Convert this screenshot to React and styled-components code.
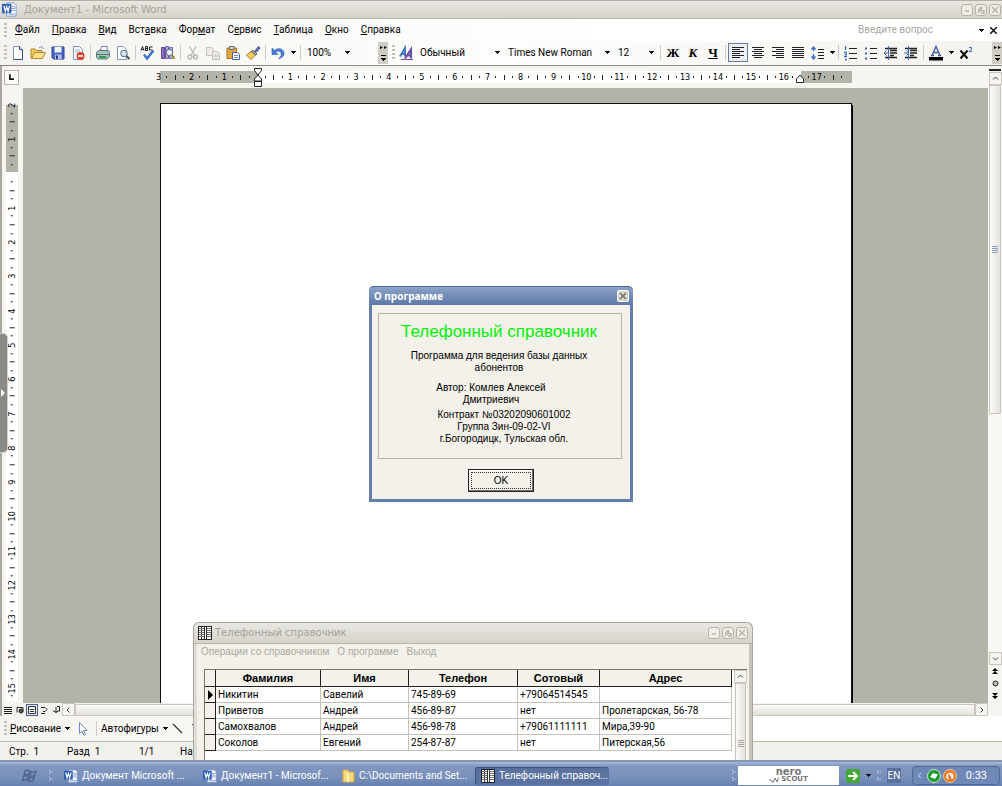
import React from "react";
import styled, { createGlobalStyle, css } from "styled-components";

const UI = 'Roboto, "Liberation Sans", sans-serif';
const SANS = '"Liberation Sans", Arial, sans-serif';

const Global = createGlobalStyle`
  * { box-sizing: border-box; }
  body { margin: 0; font: 10px/12px ${UI}; color: #000; overflow: hidden; }
  button, input, select {
    font: inherit; color: inherit; border: 0; padding: 0; margin: 0;
    background: none; appearance: none; outline: none; border-radius: 0;
  }
  svg { display: block; flex: none; }
  u { text-underline-offset: 1px; }
`;

/* ---------- shared pieces ---------- */

const Screen = styled.div`
  position: relative;
  display: flex;
  flex-direction: column;
  height: 100vh;
  background: #f3f1ec;
  overflow: hidden;
`;

const Caret = ({ color = "#111" }) => (
  <svg width="5" height="3" viewBox="0 0 5 3" shapeRendering="crispEdges">
    <path d="M0 0h5v1H4v1H3v1H2V2H1V1H0z" fill={color} />
  </svg>
);

const Grip = styled.span`
  flex: none;
  width: 3px;
  height: 15px;
  margin: 0 1px 0 4px;
  background: repeating-linear-gradient(#c4c1b8 0 2px, transparent 2px 4px);
`;

const Separator = styled.span`
  flex: none;
  width: 1px;
  height: 15px;
  margin: 0 2px;
  background: #cfccc2;
`;

/* ---------- window caption ---------- */

const TitleBar = styled.header`
  display: flex;
  align-items: center;
  flex: none;
  height: 19px;
  padding: 0 1px 0 2px;
  gap: 7px;
  border-top: 1px solid #b3afa5;
  border-bottom: 1px solid #b7b4aa;
  background: linear-gradient(#e9e7e2, #d6d3cb);
`;

const Caption = styled.h1`
  flex: 1;
  margin: 0;
  font: 10px/14px "DejaVu Sans", sans-serif;
  color: #a5a29a;
  white-space: nowrap;
`;

const CaptionButtons = styled.div`
  display: flex;
  gap: 2px;
`;

const CaptionButton = styled.button`
  width: 12px;
  height: 12px;
  display: grid;
  place-items: center;
  border: 1px solid #b5b2a8;
  border-radius: 3px;
  background: #efede7;
`;

const captionMarks = {
  min: "M2 5h4",
  max: "M1 4.500 4.500 1M4.500 1v3M1 7l3-3 3 1M4 7h3V4",
  close: "M1 1l6 6M7 1L1 7",
};

const WindowButtons = () => (
  <CaptionButtons>
    {[["min", "Свернуть"], ["max", "Развернуть"], ["close", "Закрыть"]].map(([k, label]) => (
      <CaptionButton key={k} aria-label={label}>
        <svg width="8" height="8" viewBox="0 0 8 8" fill="none" stroke="#b5b2a8" strokeWidth="1.400">
          <path d={captionMarks[k]} />
        </svg>
      </CaptionButton>
    ))}
  </CaptionButtons>
);

const WordMark = ({ size = 16 }) => (
  <svg width={size} height={size} viewBox="0 0 16 16">
    <path d="M5 1h8l2 2v12H5z" fill="#fff" stroke="#7d9bd1" />
    <path d="M10 5h4M10 7h4M10 9h4M7 13h7" stroke="#7d9bd1" />
    <path d="M0 2h10v10H0z" fill="#2c5cb5" />
    <path d="M2 4l1.500 6L5 5l1.500 5L8 4" fill="none" stroke="#fff" strokeWidth="1.300" />
  </svg>
);

/* ---------- menu and toolbars ---------- */

const MenuBar = styled.nav`
  display: flex;
  align-items: center;
  flex: none;
  height: 22px;
  background: linear-gradient(90deg, #f5f4f0, #fff 60%);
`;

const MenuItem = styled.button`
  margin: 0 12px 0 0;
  white-space: nowrap;
  &:first-of-type { margin-left: 7px; }
`;

const AskBox = styled.input`
  width: 121px;
  margin-left: auto;
  &::placeholder { color: #aaa79f; opacity: 1; }
`;

const IconButton = styled.button`
  flex: none;
  display: grid;
  place-items: center;
  width: ${(p) => p.$w || 20}px;
  height: 19px;
  ${(p) => p.$on && css`border: 1px solid #6a7aa6; background: #eeeff4;`}
`;

const ToolBar = styled.div`
  display: flex;
  align-items: center;
  flex: none;
  height: 25px;
  padding-bottom: 1px;
  border-bottom: 1px solid #8b8981;
  background: linear-gradient(90deg, #f4f3ef, #fdfdfc 50%, #f4f3ef);
`;

const Combo = styled.label`
  display: grid;
  align-items: center;
  flex: none;
  width: ${(p) => p.$w}px;
  height: 18px;
  margin-right: ${(p) => p.$after || 0}px;
  > * { grid-area: 1 / 1; }
  > select { width: 100%; padding-left: 4px; }
  > svg { justify-self: end; margin-right: 4px; pointer-events: none; }
`;

const ComboBox = ({ w, value, label, after }) => (
  <Combo $w={w} $after={after}>
    <select aria-label={label} defaultValue={value}>
      <option>{value}</option>
    </select>
    <Caret />
  </Combo>
);

const Overflow = styled.button`
  flex: none;
  display: flex;
  flex-direction: column;
  align-items: center;
  justify-content: space-between;
  width: 10px;
  height: 22px;
  padding: 4px 0 3px;
  background: #cfccc4;
`;

const OverflowButton = () => (
  <Overflow aria-label="Параметры панели">
    <svg width="7" height="3" viewBox="0 0 7 3"><path d="M0 0l3 1.500L0 3zM4 0l3 1.500L4 3z" /></svg>
    <svg width="5" height="6" viewBox="0 0 5 6" shapeRendering="crispEdges"><path d="M0 0h5v1H0zM0 3h5L3 6H2z" /></svg>
  </Overflow>
);

const Push = styled.span`
  flex: 1;
`;

const Letter = styled.span`
  font: bold 13px/16px "Liberation Serif", serif;
  font-style: ${(p) => (p.$i ? "italic" : "normal")};
  text-decoration: ${(p) => (p.$u ? "underline" : "none")};
`;

const lines = (rows, color = "#222") =>
  rows.map(([x, w], i) => <path key={i} d={`M${x} ${2.5 + i * 2}h${w}`} stroke={color} />);

const icons = {
  new: (
    <>
      <path d="M3.500 1.500h6l3 3v10h-9z" fill="#fff" stroke="#7a92bd" />
      <path d="M12.500 5v9.500h-9" fill="none" stroke="#2f4f86" />
      <path d="M9.500 1.500v3h3" fill="#c9d7ef" stroke="#2f4f86" />
    </>
  ),
  open: (
    <>
      <path d="M1 13.500V4h4l1.500 1.500H12V8" fill="#f4cf62" stroke="#a9822c" />
      <path d="M1.500 13.500 4.500 7.500h11l-3 6z" fill="#fbe08a" stroke="#b08a30" />
      <path d="M9 3c2-2 4-1 5 1" fill="none" stroke="#6b84b8" />
    </>
  ),
  save: (
    <>
      <path d="M2 2h12v12H3.500L2 12.500z" fill="#4965c0" stroke="#2c3f93" />
      <path d="M4.500 2h7v5.500h-7z" fill="#eef2fb" />
      <path d="M5 9.500h6.500V14H5z" fill="#b8c4e6" />
      <path d="M6 10.500h2V14H6z" fill="#2c3f93" />
    </>
  ),
  perm: (
    <>
      <path d="M3.500 1.500h6l3 3v10h-9z" fill="#fff" stroke="#7a92bd" />
      <path d="M5 5h5M5 7h5" stroke="#9bb0d6" />
      <circle cx="10.500" cy="11" r="4" fill="#d8402c" />
      <path d="M8 11h5" stroke="#fff" strokeWidth="1.600" />
    </>
  ),
  print: (
    <>
      <path d="M5 6 6.500 1.500h6L11.500 6z" fill="#fff" stroke="#6f86a8" />
      <path d="M1.500 7.500 4 5.500h9.500l1 2v4l-2.500 2.500H3l-1.500-2z" fill="#a8c3b9" stroke="#55767c" />
      <path d="M2 9.500h12" stroke="#55767c" />
      <path d="M4 12h7" stroke="#2f9e4c" strokeWidth="2" />
    </>
  ),
  preview: (
    <>
      <path d="M2.500 1.500h6l3 3v10h-9z" fill="#fff" stroke="#7a92bd" />
      <circle cx="9" cy="8.500" r="3.300" fill="#cfe4f3" stroke="#59697e" />
      <path d="M11.500 11l3 3" stroke="#5c5546" strokeWidth="2" />
    </>
  ),
  spell: (
    <>
      <path d="M1 5.500 2.500 1.500 4 5.500M1.500 4.500h2M5.500 1.500v4h2v-4zM5.500 3.500h2M12.500 2h-3v3h3" fill="none" stroke="#222" />
      <path d="M4 9.500l3 4 6.500-8" fill="none" stroke="#3e72cf" strokeWidth="2.400" />
    </>
  ),
  research: (
    <>
      <path d="M1.500 2.500h3v11h-3z" fill="#8b6fc0" stroke="#5c4798" />
      <path d="M5.500 1.500h3v12h-3z" fill="#b6a3dc" stroke="#6a57a8" />
      <path d="M9.500 2.500h3v11h-3z" fill="#a9bce4" stroke="#5c74b4" />
      <circle cx="9.500" cy="7.500" r="3.200" fill="#e9eef7" stroke="#59697e" />
      <path d="M11.700 10l3 3.500" stroke="#b0862c" strokeWidth="2" />
    </>
  ),
  cut: (
    <g fill="none" stroke="#bdbab2" strokeWidth="1.300">
      <path d="M4.500 1.500l5 8.500M11 1.500 6 10" />
      <circle cx="5" cy="12" r="2" />
      <circle cx="10.500" cy="12" r="2" />
    </g>
  ),
  copy: (
    <g fill="#eeece6" stroke="#c5c2b9">
      <path d="M1.500 2.500h5l2 2v6h-7z" />
      <path d="M7.500 6.500h5l2 2v6h-7zM9 10h4M9 12h4" />
    </g>
  ),
  paste: (
    <>
      <path d="M2 3h9.500v10.500H2z" fill="#e3a83a" stroke="#a9742a" />
      <path d="M4.500 1.500h4.500v3H4.500z" fill="#ddd" stroke="#666" />
      <path d="M7.500 7.500h5l2 2v5h-7z" fill="#fff" stroke="#3f60a8" />
      <path d="M9 10.500h4M9 12.500h4" stroke="#6f8dcb" />
    </>
  ),
  brush: (
    <>
      <path d="M10 6l3.500-4.500 1.500 1.500-3.500 4z" fill="#5873b8" stroke="#3a4f8c" />
      <path d="M8 5l4 4-2 1.500L6 7z" fill="#9aa0a8" stroke="#6a6a60" />
      <path d="M6 6.500 10 10.500 6 14.500 1.500 10z" fill="#efcf5d" stroke="#a9842b" />
    </>
  ),
  undo: (
    <path d="M2 3v6.500h6L5.800 7.300C8 5.500 11 6 11.300 8.800 11.500 11 10 12.500 8.500 13.500 12.500 13 14.500 10.500 14 7.500 13.300 3.700 8 2.300 4.300 5.400z" fill="#4a7ed6" stroke="#2f5aa8" strokeWidth=".6" />
  ),
  styles: (
    <>
      <path d="M2 11.500 7 3v8.500M4 9h3" fill="none" stroke="#4377bd" strokeWidth="2" />
      <path d="M7 13.500 13 4.500v9M9 10.500h4" fill="none" stroke="#6b4fa9" strokeWidth="2.200" />
      <path d="M3 14.500h12" stroke="#7b4fa9" />
    </>
  ),
  left: lines([[2, 12], [2, 8], [2, 12], [2, 8], [2, 12], [2, 8]]),
  center: lines([[2, 12], [4, 8], [2, 12], [4, 8], [2, 12], [4, 8]]),
  right: lines([[2, 12], [6, 8], [2, 12], [6, 8], [2, 12], [6, 8]]),
  justify: lines([[2, 12], [2, 12], [2, 12], [2, 12], [2, 12], [2, 12]]),
  spacing: (
    <>
      <path d="M3.500 2v4M3.500 9v5M1.500 4.500 3.500 2l2 2.500M1.500 11.500l2 2.500 2-2.500" fill="none" stroke="#3e69bd" strokeWidth="1.400" />
      <path d="M8 4.500h6M8 7.500h6M8 10.500h6M8 13.500h6" stroke="#222" />
    </>
  ),
  numbered: (
    <>
      <path d="M2.500 1v4M1 7.500h3M2 9.500h2M1 11.500h3M2 14.500h2" stroke="#3e69bd" strokeWidth="1.300" />
      <path d="M6 3.500h8M6 8.500h8M6 13.500h8" stroke="#222" />
    </>
  ),
  bullets: (
    <>
      <path d="M2 2.500h2v2H2zM2 7.500h2v2H2zM2 12.500h2v2H2z" fill="#3e69bd" />
      <path d="M7 3.500h7M7 8.500h7M7 13.500h7" stroke="#222" />
    </>
  ),
  outdent: (
    <>
      <path d="M2 3.500h12M7 5.500h7M7 8h7M7 10.500h4M2 12.500h12" stroke="#222" strokeWidth="1.400" />
      <path d="M6 8H1M3.500 5.500 1 8l2.500 2.500M5.500 1v14" stroke="#3e69bd" fill="none" />
    </>
  ),
  indent: (
    <>
      <path d="M2 3.500h12M7 5.500h7M7 8h7M7 10.500h4M2 12.500h12" stroke="#222" strokeWidth="1.400" />
      <path d="M1 8h5M3.500 5.500 6 8l-2.500 2.500M5.500 1v14" stroke="#3e69bd" fill="none" />
    </>
  ),
  fontColor: (
    <>
      <path d="M4 10.500 8 1.500l4 9M5.500 7.500h5M3 10.500h3M10 10.500h3" fill="none" stroke="#3b5fa6" strokeWidth="1.400" />
      <path d="M1 12h14v3.500H1z" fill="#000" />
    </>
  ),
  sup: (
    <>
      <path d="M2.500 5.500l7 8M9.500 5.500l-7 8" stroke="#111" strokeWidth="2" />
      <path d="M11 2.500h2.500v1.500L11 6.500h3" fill="none" stroke="#3e69bd" />
    </>
  ),
  pointer: <path d="M5.500 1.500v11l2.500-2.500 2 4.500 1.500-1-2-4h3.500z" fill="#fff" stroke="#6f86b8" />,
  line: <path d="M3 3l9 9" stroke="#333" strokeWidth="1.200" />,
  arrow: <path d="M2 3l10 10M13 9v5H8z" stroke="#333" fill="#333" />,
  tab: <path d="M5 4v7h6V9H7V4z" fill="#111" />,
};

const Icon = ({ name, size = 16 }) => (
  <svg width={size} height={size} viewBox="0 0 16 16" fill="none">{icons[name]}</svg>
);

const Tools = ({ items }) =>
  items.map((n, i) =>
    n === "|" ? <Separator key={i} /> : (
      <IconButton key={i} aria-label={n} $on={n === "left"}><Icon name={n} /></IconButton>
    )
  );

/* ---------- document area ---------- */

const Body = styled.div`
  display: flex;
  flex: 1;
  min-height: 0;
  border-left: 2px solid #a9a79f;
`;

const Main = styled.main`
  display: flex;
  flex-direction: column;
  flex: 1;
  min-width: 0;
`;

const RulerRow = styled.div`
  display: flex;
  align-items: center;
  flex: none;
  height: 22px;
  background: #f6f5f0;
`;

const TabBox = styled.button`
  display: grid;
  place-items: center;
  flex: none;
  width: 15px;
  height: 15px;
  margin: 0 4px 0 2px;
  border: 1px solid #b9b6ac;
  background: #fbfaf7;
`;

const RulerSlot = styled.div`
  display: flex;
  justify-content: center;
  flex: 1;
  min-width: 0;
`;

const Ruler = styled.div`
  position: relative;
  display: flex;
  flex: none;
  width: 692px;
  height: 12px;
  padding-right: 6px;
  background: linear-gradient(90deg, #b4b3aa 98px, #fff 98px 641px, #b4b3aa 641px);
  > div { display: grid; flex: 1; grid-template-columns: repeat(84, 1fr); margin-left: -5px; }
`;

const Mark = styled.span`
  display: flex;
  align-items: center;
  justify-content: center;
  min-width: 0;
  min-height: 0;
  font: 9px/12px "DejaVu Sans Condensed", ${UI};
  white-space: nowrap;
  ${(p) => p.$vertical && css`transform: rotate(-90deg);`}
  &::before {
    content: "";
    flex: none;
    display: ${(p) => (p.$kind ? "block" : "none")};
    width: 1px;
    height: ${(p) => (p.$kind === "tick" ? 5 : 2)}px;
    background: #222;
  }
`;

const Marks = ({ from, quarters, vertical }) => {
  const out = [];
  for (let q = from * 4; q < from * 4 + quarters; q += 1) {
    const step = ((q % 4) + 4) % 4;
    out.push(
      <Mark key={q} $vertical={vertical} $kind={step === 0 ? null : step === 2 ? "tick" : "dot"}>
        {step === 0 && q !== 0 ? Math.abs(q / 4) : null}
      </Mark>
    );
  }
  return out;
};

const IndentMarker = styled.svg`
  position: absolute;
  top: ${(p) => p.$top}px;
  left: ${(p) => p.$left}px;
`;

const Workspace = styled.div`
  display: flex;
  flex: 1;
  min-height: 0;
`;

const SideRuler = styled.div`
  display: flex;
  flex: none;
  width: 21px;
  padding: 17px 5px 2px 4px;
  background: #f6f5f0;
`;

const SideScale = styled.div`
  display: flex;
  flex: 1;
  background: linear-gradient(#b4b3aa 67px, #fff 67px);
  > div {
    display: grid;
    flex: 1;
    grid-template-rows: repeat(70, minmax(0, 1fr));
    margin-top: -4px;
  }
`;

const Canvas = styled.div`
  display: flex;
  justify-content: center;
  flex: 1;
  padding-top: 15px;
  background: #b4b3aa;
  overflow: hidden;
`;

const Paper = styled.div`
  width: 692px;
  background: #fff;
  border: solid #111;
  border-width: 1px 1px 0 1px;
  box-shadow: 1px 2px 0 #000;
`;

const BottomRow = styled.div`
  display: flex;
  align-items: center;
  flex: none;
  height: 13px;
`;

const ViewButton = styled.button`
  display: grid;
  place-items: center;
  flex: none;
  width: 12px;
  height: 12px;
  ${(p) => p.$on && css`border: 1px solid #4b5f95; background: #e3e7f2;`}
`;

const ScrollButton = styled.button`
  display: grid;
  place-items: center;
  flex: none;
  width: 13px;
  height: 13px;
  border: 1px solid #c9c6bd;
  background: #f5f4f0;
`;

const chevrons = { left: "M4.500 1.500 2 4l2.500 2.500", right: "M2.500 1.500 5 4 2.500 6.500", up: "M1 4.500 3.500 2 6 4.500", down: "M1 2.500 3.500 5 6 2.500" };
const ScrollArrow = ({ dir }) => (
  <ScrollButton aria-label={dir}>
    <svg width="7" height="7" viewBox="0 0 7 7" fill="none" stroke="#444"><path d={chevrons[dir]} /></svg>
  </ScrollButton>
);

const HTrack = styled.div`
  flex: 1;
  height: 12px;
  border: 1px solid #c9c6bd;
  background: linear-gradient(#fbfaf8, #e4e2db);
`;

const VScroll = styled.div`
  display: flex;
  flex-direction: column;
  align-items: center;
  flex: none;
  width: 14px;
  padding: 2px 0 15px;
  background: #f5f4f0;
`;

const SplitBox = styled.div`
  width: 12px;
  height: 3px;
  margin-bottom: 1px;
  border-bottom: 2px solid #222;
`;

const VTrack = styled.div`
  flex: 1;
  align-self: stretch;
  background: #f8f7f4;
`;

const VThumb = styled.div`
  display: grid;
  place-items: center;
  height: ${(p) => p.$size || "58%"};
  margin: 0 1px;
  border: 1px solid #c9c6bd;
  background: linear-gradient(90deg, #fbfaf8, #e4e2db);
  &::before {
    content: "";
    width: 6px;
    height: 7px;
    background: repeating-linear-gradient(${(p) => p.$grip || "#8b9dc4"} 0 1px, transparent 1px 2px);
  }
`;

const BrowseButton = styled.button`
  display: grid;
  place-items: center;
  width: 13px;
  height: 12px;
`;

const DrawingBar = styled.div`
  display: flex;
  align-items: center;
  flex: none;
  height: 26px;
  border-bottom: 1px solid #bbb8ae;
  background: linear-gradient(90deg, #f5f4f0, #fff 70%);
`;

const DropButton = styled.button`
  display: flex;
  align-items: center;
  gap: 4px;
  margin-left: 2px;
  white-space: nowrap;
`;

const StatusBar = styled.footer`
  display: grid;
  grid-template-columns: 58px 72px 41px auto;
  align-items: center;
  flex: none;
  height: 18px;
  padding: 2px 0 0 9px;
`;

const SideTab = styled.button`
  position: absolute;
  left: 0;
  top: 333px;
  display: grid;
  place-items: center start;
  width: 8px;
  height: 120px;
  border: 1px solid #d0cec8;
  border-left: 0;
  border-radius: 0 5px 5px 0;
  background: #8a8985;
`;

/* ---------- dialog ---------- */

const Dialog = styled.section`
  position: absolute;
  top: 286px;
  left: calc(50% - 132px);
  width: 264px;
  border: 3px solid #637fae;
  border-top: 0;
  border-radius: 5px 5px 0 0;
  background: #f3f1ea;
  font-family: ${SANS};
`;

const DialogTitle = styled.header`
  display: flex;
  align-items: center;
  justify-content: space-between;
  height: 19px;
  margin: 0 -3px;
  padding: 0 4px 0 5px;
  border-top: 1px solid #4f6793;
  border-radius: 5px 5px 0 0;
  background: linear-gradient(#8ba2c8, #5f7aa9);
  h2 { margin: 0; font: bold 10px/14px "Noto Sans", sans-serif; color: #fff; }
`;

const DialogClose = styled.button`
  display: grid;
  place-items: center;
  width: 12px;
  height: 12px;
  border-radius: 2px;
  border: 1px solid #fff;
  background: #d9d6cd;
`;

const Frame = styled.div`
  margin: 8px 8px 10px 6px;
  height: 146px;
  padding: 8px 2px 0 0;
  border: 1px solid #b5b2a9;
  text-align: center;
  white-space: pre-line;
`;

const ProgramName = styled.h3`
  margin: 0 0 9px;
  font: 17px/19px ${SANS};
  white-space: nowrap;
  color: #05ee05;
`;

const Note = styled.p`
  margin: 0 0 ${(p) => p.$after || 0}px;
  padding: 0 ${(p) => p.$right || 0}px 0 ${(p) => p.$left || 0}px;
`;

const OkButton = styled.button`
  display: block;
  width: 66px;
  height: 23px;
  margin: 0 auto 7px;
  padding: 2px;
  border: 1px solid #222;
  box-shadow: inset -1px -1px #77746b, inset 1px 1px #fff;
  background: #f3f1ea;
  > span { display: block; border: 1px dotted #333; line-height: 15px; }
`;

/* ---------- phone book window ---------- */

const BookWindow = styled.section`
  position: absolute;
  left: 193px;
  bottom: 26px;
  display: flex;
  flex-direction: column;
  width: 560px;
  height: 138px;
  padding: 0 4px;
  border: solid #a9a69d;
  border-width: 1px 1px 0;
  border-radius: 6px 6px 0 0;
  background: linear-gradient(90deg, #dfddd7 3px, #f3f1ea 3px calc(100% - 3px), #c6c3ba calc(100% - 3px));
`;

const BookTitle = styled(TitleBar)`
  height: 21px;
  margin: 0 -4px;
  padding: 0 4px;
  gap: 3px;
  border-top: 0;
  border-radius: 6px 6px 0 0;
`;

const BookMenu = styled.nav`
  display: flex;
  gap: 8px;
  height: 25px;
  padding: 2px 3px;
  color: #aaa79e;
  font-family: ${SANS};
  button { white-space: nowrap; line-height: 12px; height: 12px; }
`;

const GridPane = styled.div`
  display: flex;
  flex: 1;
  min-height: 0;
  margin: 0 1px 0 6px;
  overflow: hidden;
  border-top: 1px solid #77756d;
  border-left: 1px solid #77756d;
  background: #fff;
`;

const Table = styled.table`
  table-layout: fixed;
  width: 527px;
  border-collapse: separate;
  border-spacing: 0;
  align-self: flex-start;
  line-height: 14px;
  th, td { padding: 0; height: 16px; white-space: nowrap; }
  td { padding-left: 2px; border: solid #c3c1ba; border-width: 0 1px 1px 0; }
  thead th {
    height: 17px;
    border: solid #222;
    border-width: 0 1px 1px 0;
    background: #f3f1ea;
    font: bold 11px/14px ${SANS};
  }
  tbody th { border: solid #222; border-width: 0 1px 1px 0; background: #f3f1ea; }
  tbody th svg { margin-left: 3px; }
`;

const GridScroll = styled.div`
  display: flex;
  flex-direction: column;
  margin-left: 2px;
  width: 13px;
`;

const BookIcon = ({ w = 14, h = 14 }) => (
  <svg width={w} height={h} viewBox="0 0 14 14" shapeRendering="crispEdges">
    <path d="M.5.500h13v13H.5z" fill="#fff" stroke="#222" />
    <path d="M3.500 1v12M6.500 1v12M8.500 1v12" stroke="#333" />
    <path d="M1 2.500h5M9 2.500h4M1 4.500h5M9 4.500h4M1 6.500h5M9 6.500h4M1 8.500h5M9 8.500h4M1 10.500h5M9 10.500h4" stroke="#777" />
  </svg>
);

const contacts = [
  ["Никитин", "Савелий", "745-89-69", "+79064514545", ""],
  ["Приветов", "Андрей", "456-89-87", "нет", "Пролетарская, 56-78"],
  ["Самохвалов", "Андрей", "456-98-78", "+79061111111", "Мира,39-90"],
  ["Соколов", "Евгений", "254-87-87", "нет", "Питерская,56"],
];

/* ---------- taskbar ---------- */

const TaskBar = styled.footer`
  display: flex;
  align-items: center;
  flex: none;
  height: 26px;
  padding: 4px 2px 1px 22px;
  border-top: 2px solid #8794b4;
  background: linear-gradient(#a9badb, #8197c0 4px, #7990bb 15px, #6681b0);
  color: #fff;
`;

const TaskGrip = () => (
  <svg width="6" height="14" viewBox="0 0 6 14" fill="none" stroke="#c0cce3">
    <path d="M1 1l2 2-2 2M1 8l2 2-2 2M4 3l1 1M4 10l1 1" />
  </svg>
);

const TaskButtons = styled.div`
  display: flex;
  flex: 1;
  gap: 5px;
  margin-left: 4px;
  min-width: 0;
`;

const TaskButton = styled.button`
  display: flex;
  align-items: center;
  gap: 4px;
  width: 134px;
  height: 18px;
  padding-left: 6px;
  border-radius: 3px;
  white-space: nowrap;
  ${(p) => p.$on && css`background: #5a729f; box-shadow: inset 1px 1px 1px #3d547f;`}
`;

const StartButton = styled.button`
  margin-right: 11px;
`;

const NeroBox = styled.div`
  display: flex;
  flex-direction: column;
  align-items: center;
  justify-content: center;
  width: 101px;
  height: 19px;
  margin: 0 7px 0 1px;
  background: #fff;
  color: #77767b;
  font: bold 10px/8px "DejaVu Sans", sans-serif;
  small { display: flex; align-items: center; gap: 1px; font-size: 7px; line-height: 7px; }
`;

const Lang = styled.button`
  width: 14px;
  height: 15px;
  margin: 0 11px 0 5px;
  background: #56709f;
`;

const Tray = styled.div`
  display: flex;
  align-items: center;
  gap: 2px;
  width: 88px;
  height: 19px;
  padding: 0 4px;
  border: 1px solid #50689a;
  border-radius: 4px;
  background: #7088b6;
  time { margin-left: auto; padding-right: 8px; font-size: 11px; }
`;

const menu = [["", "Ф", "айл"], ["", "П", "равка"], ["", "В", "ид"], ["Вст", "а", "вка"], ["Фор", "м", "ат"], ["С", "е", "рвис"], ["", "Т", "аблица"], ["", "О", "кно"], ["", "С", "правка"]];

const tasks = [
  [<WordMark size={14} />, "Документ Microsoft ..."],
  [<WordMark size={14} />, "Документ1 - Microsof..."],
  [<svg width="13" height="14" viewBox="0 0 13 14"><path d="M1 1h5l1 2h5v10H1z" fill="#f6da7c" stroke="#d2a73e" /><path d="M5 5h2v8H5z" fill="#fff2bd" /></svg>, "C:\\Documents and Set..."],
  [<BookIcon />, "Телефонный справоч...", true],
];

export default function App() {
  return (
    <Screen>
      <Global />
      <TitleBar>
        <WordMark size={15} />
        <Caption>Документ1 - Microsoft Word</Caption>
        <WindowButtons />
      </TitleBar>

      <MenuBar>
        <Grip />
        {menu.map(([a, b, c]) => (
          <MenuItem key={a + b + c}>{a}<u>{b}</u>{c}</MenuItem>
        ))}
        <AskBox aria-label="Вопрос" placeholder="Введите вопрос" />
        <Caret />
        <IconButton $w={18} aria-label="Закрыть документ">
          <svg width="7" height="7" viewBox="0 0 7 7" stroke="#111" strokeWidth="1.500"><path d="M0 0l7 7M7 0L0 7" /></svg>
        </IconButton>
      </MenuBar>

      <ToolBar>
        <Grip />
        <Tools items={["new", "open", "save", "perm", "|", "print", "preview", "|", "spell", "research", "|", "cut", "copy", "paste", "brush", "|", "undo"]} />
        <IconButton $w={10} aria-label="Список отмены"><Caret /></IconButton>
        <Separator />
        <ComboBox w={51} value="100%" label="Масштаб" after={24} />
        <OverflowButton />
        <Grip />
        <IconButton aria-label="Стили"><Icon name="styles" /></IconButton>
        <ComboBox w={88} value="Обычный" label="Стиль" />
        <ComboBox w={110} value="Times New Roman" label="Шрифт" />
        <ComboBox w={44} value="12" label="Размер" />
        <Separator />
        <IconButton aria-label="Полужирный"><Letter>Ж</Letter></IconButton>
        <IconButton aria-label="Курсив"><Letter $i>К</Letter></IconButton>
        <IconButton aria-label="Подчеркнутый"><Letter $u>Ч</Letter></IconButton>
        <Separator />
        <Tools items={["left", "center", "right", "justify", "spacing"]} />
        <IconButton $w={8} aria-label="Интервал"><Caret /></IconButton>
        <Separator />
        <Tools items={["numbered", "bullets", "outdent", "indent", "|", "fontColor"]} />
        <IconButton $w={10} aria-label="Цвет"><Caret /></IconButton>
        <Tools items={["sup"]} />
        <Push />
        <OverflowButton />
      </ToolBar>

      <Body>
        <Main>
          <RulerRow>
            <TabBox aria-label="Табуляция"><Icon name="tab" size={13} /></TabBox>
            <RulerSlot>
              <Ruler>
                <div><Marks from={-3} quarters={84} /></div>
                <IndentMarker $left={93} $top={-3} width="10" height="20" viewBox="0 0 10 20" fill="#fff" stroke="#222">
                  <path d="M1.500.500h7v2L5 7 1.500 2.500zM5 7l3.500 4v2h-7v-2zM1.500 13.500h7v5h-7z" />
                </IndentMarker>
                <IndentMarker $left={635} $top={3} width="10" height="9" viewBox="0 0 10 9" fill="#fff" stroke="#222">
                  <path d="M5 1l3.500 4v3.500h-7V5z" />
                </IndentMarker>
              </Ruler>
            </RulerSlot>
          </RulerRow>
          <Workspace>
            <SideRuler>
              <SideScale><div><Marks from={-2} quarters={70} vertical /></div></SideScale>
            </SideRuler>
            <Canvas><Paper /></Canvas>
          </Workspace>
          <BottomRow>
            <ViewButton aria-label="Обычный режим"><svg width="8" height="8" viewBox="0 0 8 8" stroke="#222"><path d="M0 1.500h8M0 3.500h8M0 5.500h8M0 7.500h8" /></svg></ViewButton>
            <ViewButton aria-label="Веб-документ"><svg width="8" height="8" viewBox="0 0 8 8" stroke="#222" fill="none"><path d="M1 6.500V1.500h6v4" /><circle cx="5" cy="5" r="2" fill="#555" /></svg></ViewButton>
            <ViewButton $on aria-label="Разметка"><svg width="8" height="8" viewBox="0 0 8 8" stroke="#333" fill="#fff"><path d="M.5.500h7v7h-7zM2 3.500h4M2 5.500h4" /></svg></ViewButton>
            <ViewButton aria-label="Структура"><svg width="8" height="8" viewBox="0 0 8 8" stroke="#222" fill="none"><path d="M1 1.500h4l2 2-2 2H3M1 7.500h4" /></svg></ViewButton>
            <ViewButton aria-label="Чтение"><svg width="8" height="8" viewBox="0 0 8 8" stroke="#222" fill="none"><path d="M4 1v6M1 4.500l3 2 3-2M5 .5h2.500v5" /></svg></ViewButton>
            <ScrollArrow dir="left" />
            <HTrack />
            <ScrollArrow dir="right" />
          </BottomRow>
        </Main>
        <VScroll>
          <SplitBox />
          <ScrollArrow dir="up" />
          <VTrack><VThumb /></VTrack>
          <ScrollArrow dir="down" />
          <BrowseButton aria-label="Предыдущая страница"><svg width="6" height="7" viewBox="0 0 6 7"><path d="M3 0l3 3H0zM3 3l3 3H0z" /></svg></BrowseButton>
          <BrowseButton aria-label="Выбор объекта"><svg width="7" height="7" viewBox="0 0 7 7"><circle cx="3.500" cy="3.500" r="2.500" fill="#bbb" stroke="#222" /></svg></BrowseButton>
          <BrowseButton aria-label="Следующая страница"><svg width="6" height="7" viewBox="0 0 6 7"><path d="M0 1h6L3 4zM0 4h6L3 7z" /></svg></BrowseButton>
        </VScroll>
      </Body>

      <DrawingBar>
        <Grip />
        <DropButton><span><u>Р</u>исование</span><Caret /></DropButton>
        <IconButton $w={24} aria-label="Выбор объектов"><Icon name="pointer" /></IconButton>
        <Separator />
        <DropButton><span>Автофи<u>г</u>уры</span><Caret /></DropButton>
        <IconButton aria-label="Линия"><Icon name="line" /></IconButton>
        <IconButton aria-label="Стрелка"><Icon name="arrow" /></IconButton>
      </DrawingBar>
      <StatusBar>
        <span>Стр.&nbsp; 1</span><span>Разд&nbsp; 1</span><span>1/1</span><span>На</span>
      </StatusBar>

      <TaskBar>
        <StartButton aria-label="Пуск">
          <svg width="15" height="14" viewBox="0 0 15 14" fill="none" stroke="#4c5f88" strokeWidth="1.200">
            <path d="M3 2c2-1.500 3.500-1 4.500 0L6.500 6C5 5 4 5 2 6zM9 2.500c1.500 1 3 1 5 0l-1.500 4c-2 1-3 .5-4.500 0zM1.500 7.500c2-1 3.500-1 4.500 0l-1 4c-1.500-1-3-1-4.500 0zM7.500 8c1.500 1 3 1 4.500 0l-1 4c-2 1-3 .5-4.500 0z" />
          </svg>
        </StartButton>
        <TaskGrip />
        <TaskButtons>
          {tasks.map(([icon, text, on]) => (
            <TaskButton key={text} $on={on}>{icon}<span>{text}</span></TaskButton>
          ))}
        </TaskButtons>
        <TaskGrip />
        <NeroBox>
          <span>nero</span>
          <small>
            <svg width="11" height="6" viewBox="0 0 11 6" fill="none" stroke="#77767b"><path d="M0 3h2l2 2.500L6 1l2 4 1.500-4.500" /></svg>
            SCOUT
          </small>
        </NeroBox>
        <IconButton $w={14} aria-label="Поиск">
          <svg width="14" height="14" viewBox="0 0 14 14"><rect width="14" height="14" rx="2" fill="#43a832" /><path d="M2 7h8M7 3l4 4-4 4" fill="none" stroke="#fff" strokeWidth="2" /></svg>
        </IconButton>
        <IconButton $w={16} aria-label="Параметры поиска"><Caret /></IconButton>
        <TaskGrip />
        <Lang>EN</Lang>
        <Tray>
          <svg width="5" height="7" viewBox="0 0 5 7" fill="none" stroke="#d5def0"><path d="M4 1 1 3.500 4 6" /></svg>
          <svg width="1" height="1" />
          <svg width="14" height="14" viewBox="0 0 14 14"><circle cx="7" cy="7" r="6.500" fill="#1f9a2f" stroke="#c9ecc9" /><path d="M3 8l3-4 5 1.500L8 10z" fill="#fff" /></svg>
          <svg width="14" height="14" viewBox="0 0 14 14"><circle cx="7" cy="7" r="6.500" fill="#ea7a2c" stroke="#f6c58a" /><path d="M5.500 10C3 8 4 4.500 7 4.500S10.500 7.500 9 9.500M9 9.500V6.500H7" fill="none" stroke="#fff" strokeWidth="1.600" /></svg>
          <time>0:33</time>
        </Tray>
      </TaskBar>

      <SideTab aria-label="Панель">
        <svg width="5" height="8" viewBox="0 0 5 8"><path d="M1 0l4 4-4 4z" fill="#fff" /></svg>
      </SideTab>

      <BookWindow>
        <BookTitle>
          <BookIcon />
          <Caption>Телефонный справочник</Caption>
          <WindowButtons />
        </BookTitle>
        <BookMenu>
          <button>Операции со справочником</button>
          <button>О программе</button>
          <button>Выход</button>
        </BookMenu>
        <GridPane>
          <Table>
            <colgroup>
              {[11, 105, 88, 109, 82, 132].map((w, i) => <col key={i} width={w} />)}
            </colgroup>
            <thead>
              <tr>
                <th aria-label="Текущая запись" />
                {["Фамилия", "Имя", "Телефон", "Сотовый", "Адрес"].map((h) => <th key={h}>{h}</th>)}
              </tr>
            </thead>
            <tbody>
              {contacts.map((row, i) => (
                <tr key={row[0]}>
                  <th>{i === 0 && <svg width="6" height="10" viewBox="0 0 6 10"><path d="M0 0l5 5-5 5z" /></svg>}</th>
                  {row.map((cell, j) => <td key={j}>{cell}</td>)}
                </tr>
              ))}
            </tbody>
          </Table>
          <GridScroll>
            <ScrollArrow dir="up" />
            <VTrack><VThumb $size="120px" $grip="#aaa79e" /></VTrack>
          </GridScroll>
        </GridPane>
      </BookWindow>

      <Dialog role="dialog" aria-label="О программе">
        <DialogTitle>
          <h2>О программе</h2>
          <DialogClose aria-label="Закрыть">
            <svg width="8" height="8" viewBox="0 0 8 8" stroke="#77736a" strokeWidth="1.500"><path d="M1 1l6 6M7 1L1 7" /></svg>
          </DialogClose>
        </DialogTitle>
        <Frame>
          <ProgramName>Телефонный справочник</ProgramName>
          <Note $after={8}>{"Программа для ведения базы данных\nабонентов"}</Note>
          <Note $after={3} $right={16}>{"Автор: Комлев Алексей\nДмитриевич"}</Note>
          <Note $left={10}>{"Контракт №03202090601002\nГруппа Зин-09-02-VI\nг.Богородицк, Тульская обл."}</Note>
        </Frame>
        <OkButton><span>OK</span></OkButton>
      </Dialog>
    </Screen>
  );
}
